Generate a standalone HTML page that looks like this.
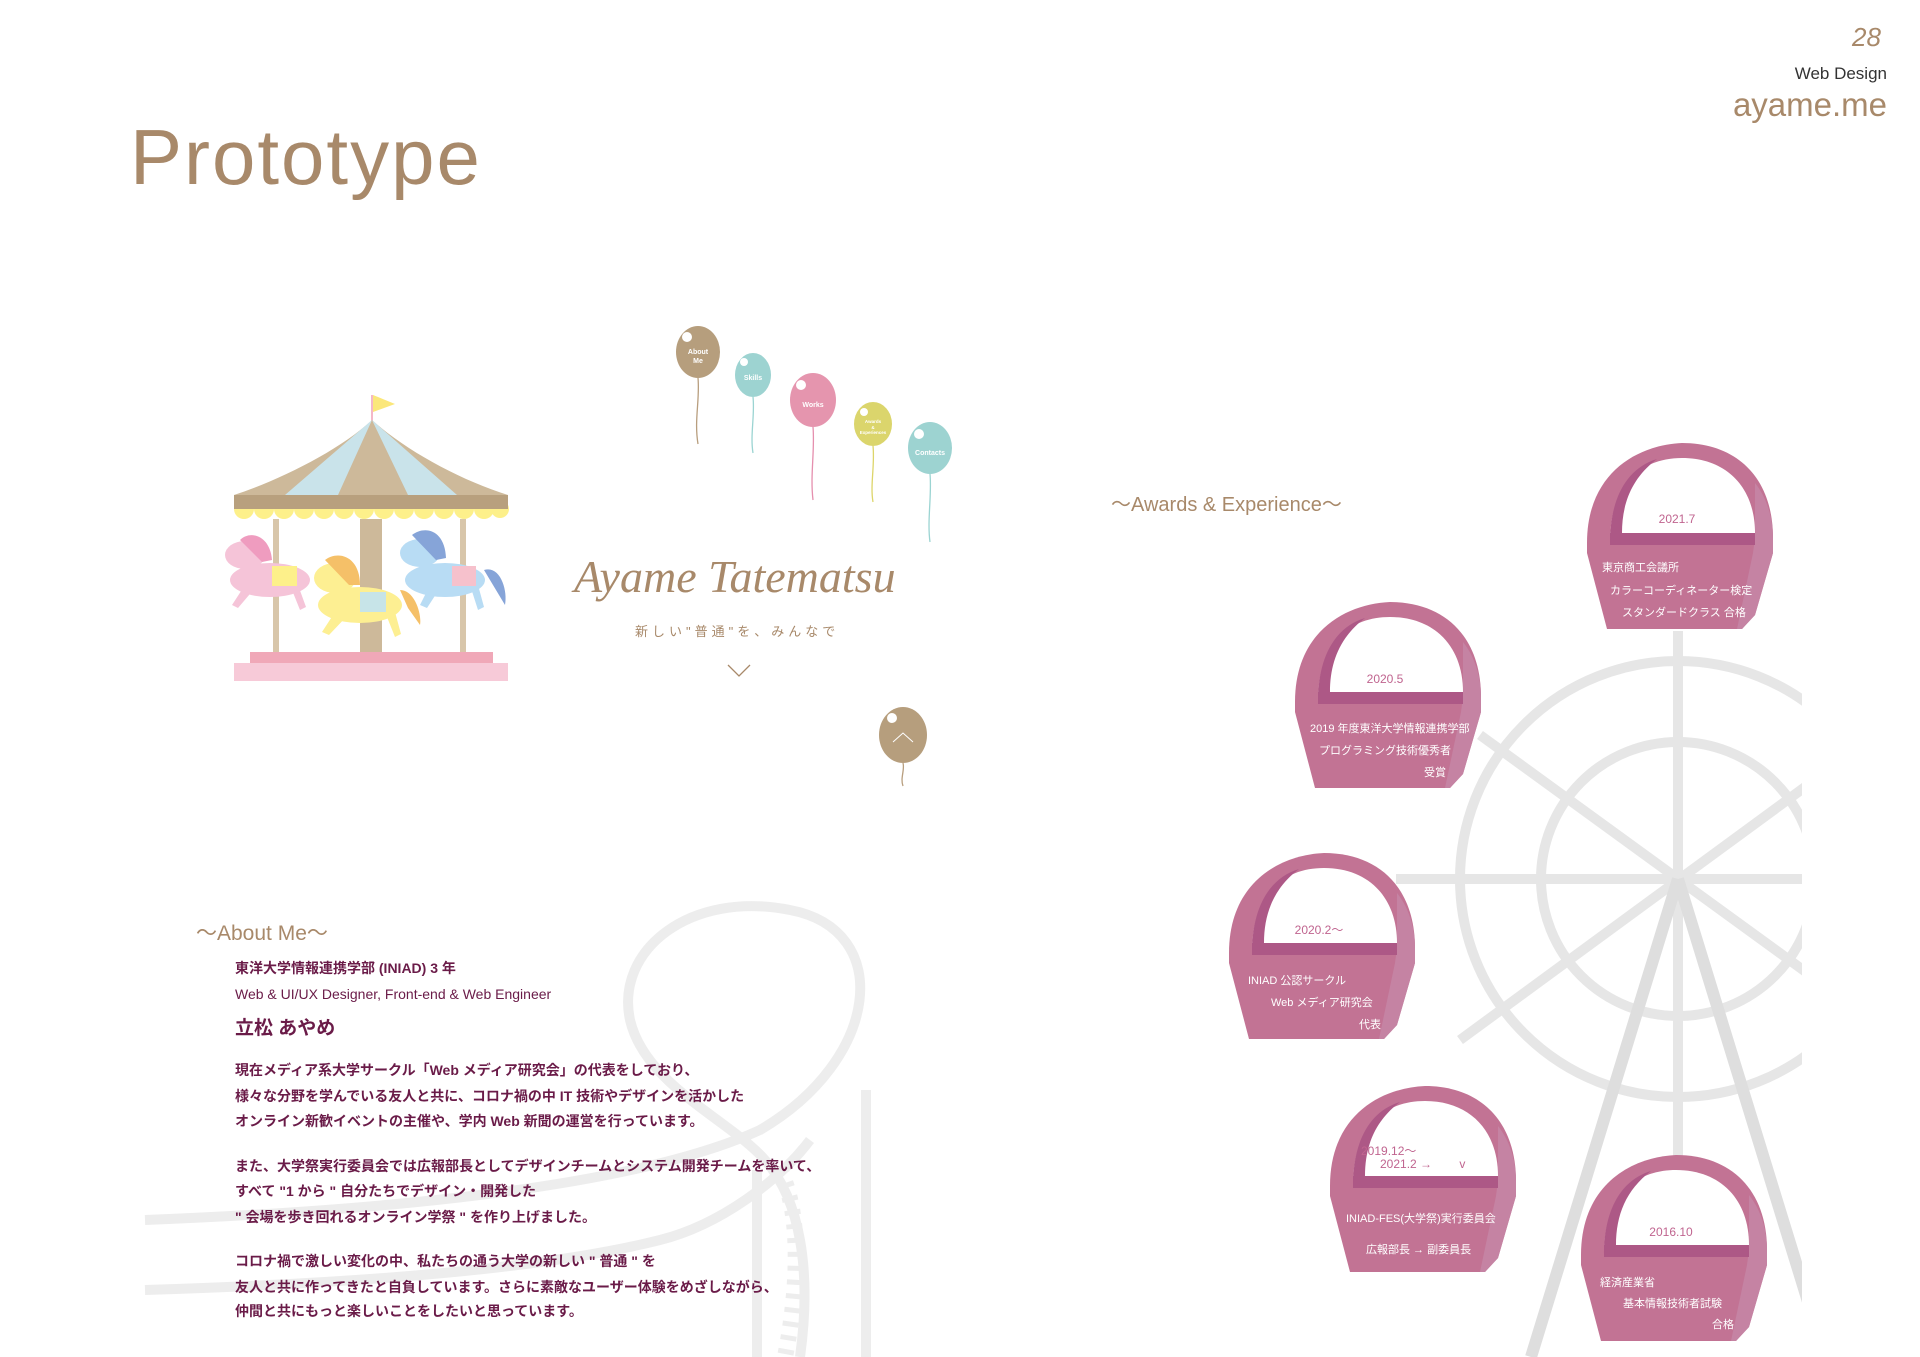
<!DOCTYPE html>
<html><head><meta charset="utf-8">
<style>
html,body{margin:0;padding:0;background:#fff;}
body{width:1920px;height:1357px;position:relative;overflow:hidden;font-family:"Liberation Sans","Noto Sans CJK JP",sans-serif;}
.a{position:absolute;white-space:nowrap;}
.br{color:#a8896a;}
.ab{color:#6a1b48;font-size:14px;line-height:20px;left:235px;font-weight:bold;}
</style></head><body>
<svg class="a" style="left:0;top:0" width="1920" height="1357" viewBox="0 0 1920 1357">
<defs><clipPath id="cw"><rect x="0" y="0" width="1802" height="1357"/></clipPath>
<g id="gon">
<path d="M0,100 C0,30 50,2 95,0 C150,0 186,35 186,95 L186,110 L168,172 L155,186 L20,186 L0,110 Z" fill="#c27394"/>
<path d="M168,40 C180,55 186,75 186,95 L186,110 L168,172 L155,186 L150,186 L166,110 L168,95 Z" fill="#c583a3"/>
<path d="M23,100 C23,40 55,15 95,15 C140,15 168,45 168,90 L168,100 Z" fill="#fff"/>
<path d="M23,100 C23,55 40,25 70,16 C45,35 35,60 35,90 Z" fill="#ad5886"/>
<rect x="23" y="90" width="145" height="12" fill="#ad5886"/>
</g></defs>
<!-- coaster -->
<g fill="none" stroke="#ededed" stroke-width="10">
<path d="M145,1220 C400,1210 640,1185 760,1130 C880,1060 895,930 790,910 C690,890 615,950 630,1020 C645,1085 730,1120 765,1160 C800,1200 812,1270 800,1357"/>
<path d="M145,1290 C400,1282 560,1265 660,1240 C720,1225 780,1180 810,1140"/>
<path d="M757,1170 L757,1357 M866,1090 L866,1357"/>
</g>
<path d="M780,1170 C800,1210 800,1280 785,1357" fill="none" stroke="#ededed" stroke-width="16" stroke-dasharray="5 9"/>
<!-- ferris wheel -->
<g clip-path="url(#cw)" fill="none">
<g stroke="#e6e6e6" stroke-width="10">
<circle cx="1678" cy="879" r="218"/>
<circle cx="1678" cy="879" r="137"/>
<path d="M1678,631 L1678,1160 M1396,879 L1802,879 M1480,735 L1876,1023 M1460,1040 L1876,735"/>
</g>
<path d="M1678,879 L1531,1357 M1678,879 L1825,1357" stroke="#dedede" stroke-width="12"/>
</g>
<!-- gondolas -->
<use href="#gon" x="1587" y="443"/>
<use href="#gon" x="1295" y="602"/>
<use href="#gon" x="1229" y="853"/>
<use href="#gon" x="1330" y="1086"/>
<use href="#gon" x="1581" y="1155"/>
<g font-family="Liberation Sans,Noto Sans CJK JP,sans-serif" font-size="11" fill="#fff">
<text x="1677" y="523" fill="#c0648f" font-size="12" text-anchor="middle">2021.7</text>
<text x="1602" y="571">東京商工会議所</text><text x="1610" y="594">カラーコーディネーター検定</text><text x="1622" y="616">スタンダードクラス 合格</text>
<text x="1385" y="683" fill="#c0648f" font-size="12" text-anchor="middle">2020.5</text>
<text x="1310" y="732">2019 年度東洋大学情報連携学部</text><text x="1319" y="754">プログラミング技術優秀者</text><text x="1424" y="776">受賞</text>
<text x="1319" y="934" fill="#c0648f" font-size="12" text-anchor="middle">2020.2～</text>
<text x="1248" y="984">INIAD 公認サークル</text><text x="1271" y="1006">Web メディア研究会</text><text x="1359" y="1028">代表</text>
<text x="1361" y="1155" fill="#c0648f" font-size="12">2019.12～</text><text x="1380" y="1168" fill="#c0648f" font-size="12">2021.2 → 　　v</text>
<text x="1346" y="1222">INIAD-FES(大学祭)実行委員会</text><text x="1366" y="1253">広報部長 → 副委員長</text>
<text x="1671" y="1236" fill="#c0648f" font-size="12" text-anchor="middle">2016.10</text>
<text x="1600" y="1286">経済産業省</text><text x="1623" y="1307">基本情報技術者試験</text><text x="1712" y="1328">合格</text>
</g>
<!-- carousel -->
<g>
<line x1="372" y1="395" x2="372" y2="422" stroke="#f4b8c8" stroke-width="2"/>
<path d="M373,395 L395,404 L373,412Z" fill="#fbe77a"/>
<path d="M372,420 C340,450 280,480 234,495 L508,495 C460,480 405,450 372,420Z" fill="#cdb99a"/>
<path d="M372,420 L285,495 L338,495Z M372,420 L408,495 L457,495Z" fill="#c9e3ea"/>
<g fill="#fdf08a"><circle cx="244" cy="509" r="10"/><circle cx="264" cy="509" r="10"/><circle cx="284" cy="509" r="10"/><circle cx="304" cy="509" r="10"/><circle cx="324" cy="509" r="10"/><circle cx="344" cy="509" r="10"/><circle cx="364" cy="509" r="10"/><circle cx="384" cy="509" r="10"/><circle cx="404" cy="509" r="10"/><circle cx="424" cy="509" r="10"/><circle cx="444" cy="509" r="10"/><circle cx="464" cy="509" r="10"/><circle cx="484" cy="509" r="10"/><circle cx="500" cy="509" r="9"/></g>
<rect x="234" y="495" width="274" height="14" fill="#b8a07e"/>
<rect x="273" y="519" width="6" height="134" fill="#d8c6aa"/>
<rect x="460" y="519" width="6" height="134" fill="#d8c6aa"/>
<rect x="360" y="519" width="22" height="134" fill="#cdb99a"/>
<rect x="250" y="652" width="243" height="11" fill="#f0a8b8"/>
<rect x="234" y="663" width="274" height="18" fill="#f7cad8"/>
<!-- horses -->
<g fill="#f5c4d8"><ellipse cx="270" cy="580" rx="40" ry="17"/><ellipse cx="245" cy="555" rx="20" ry="14"/><path d="M245,585 L232,605 L238,608 L255,588Z M290,585 L300,610 L306,607 L298,585Z"/></g>
<path d="M240,540 C250,530 270,535 272,560 L262,562Z" fill="#ef9cbf"/>
<rect x="272" y="566" width="25" height="20" fill="#fdf08a"/>
<g fill="#b8dcf4"><ellipse cx="445" cy="580" rx="40" ry="17"/><ellipse cx="420" cy="553" rx="20" ry="14"/><path d="M430,585 L420,605 L427,608 L440,588Z M470,585 L478,610 L484,607 L478,585Z"/></g>
<path d="M412,535 C425,525 445,530 446,558 L436,560Z M484,570 C500,565 508,590 505,605 L496,590Z" fill="#86a4d8"/>
<rect x="452" y="566" width="24" height="20" fill="#f6c1cc"/>
<g fill="#fdef92"><ellipse cx="360" cy="605" rx="42" ry="18"/><ellipse cx="335" cy="578" rx="21" ry="15"/><path d="M335,612 L322,632 L329,635 L348,615Z M385,612 L395,637 L401,634 L395,612Z"/></g>
<path d="M325,560 C338,550 360,556 360,585 L349,585Z M400,590 C415,590 422,615 420,625 L408,608Z" fill="#f5c068"/>
<rect x="360" y="592" width="26" height="20" fill="#c7e4e8"/>
</g>
<!-- balloons -->
<g fill="none" stroke-width="1.3">
<path d="M698,378 C700,400 694,420 698,444" stroke="#b89e7e"/>
<path d="M753,397 C755,415 750,435 753,453" stroke="#9bd4d2"/>
<path d="M813,427 C815,450 810,475 813,500" stroke="#e58fae"/>
<path d="M873,446 C875,465 870,485 873,502" stroke="#ddd56a"/>
<path d="M930,474 C932,495 927,520 930,542" stroke="#9bd4d2"/>
<path d="M903,763 C905,770 900,778 903,786" stroke="#b89e7e"/>
</g>
<g><ellipse cx="698" cy="352" rx="22" ry="26" fill="#b69e7d"/><circle cx="687" cy="337" r="5" fill="#fff"/>
<ellipse cx="753" cy="375" rx="18" ry="22" fill="#9dd3d1"/><circle cx="744" cy="362" r="4" fill="#fff"/>
<ellipse cx="813" cy="400" rx="23" ry="27" fill="#e595ae"/><circle cx="801" cy="385" r="5" fill="#fff"/>
<ellipse cx="873" cy="424" rx="19" ry="22" fill="#dbd56c"/><circle cx="864" cy="412" r="4" fill="#fff"/>
<ellipse cx="930" cy="448" rx="22" ry="26" fill="#9dd3d1"/><circle cx="919" cy="434" r="5" fill="#fff"/>
<ellipse cx="903" cy="735" rx="24" ry="28" fill="#b69e7d"/><circle cx="892" cy="718" r="5" fill="#fff"/>
<path d="M893,742 L903,733 L913,742" fill="none" stroke="#fff" stroke-width="1"/></g>
<g fill="#fff" font-family="Liberation Sans,sans-serif" font-weight="bold" text-anchor="middle">
<text x="698" y="354" font-size="7">About</text><text x="698" y="363" font-size="7">Me</text>
<text x="753" y="380" font-size="7">Skills</text>
<text x="813" y="407" font-size="7">Works</text>
<text x="873" y="423" font-size="4.5">Awards</text><text x="873" y="429" font-size="4.5">&amp;</text><text x="873" y="434" font-size="4.5">Experiences</text>
<text x="930" y="455" font-size="7">Contacts</text>
</g>
<path d="M728,665 L739,676 L750,665" fill="none" stroke="#a8896a" stroke-width="1.3"/>
</svg>

<div class="a br" style="left:1852px;top:22px;font-size:26px;font-style:italic;">28</div>
<div class="a" style="right:33px;top:64px;font-size:17px;color:#333;">Web Design</div>
<div class="a br" style="right:33px;top:86px;font-size:33px;">ayame.me</div>
<div class="a br" style="left:130px;top:112px;font-size:78px;letter-spacing:2px;">Prototype</div>

<div class="a br" style="left:574px;top:550px;font-size:46px;font-family:'Liberation Serif',serif;font-style:italic;">Ayame Tatematsu</div>
<div class="a br" style="left:635px;top:621px;font-size:13px;letter-spacing:4px;">新しい"普通"を、みんなで</div>

<div class="a br" style="left:1111px;top:488px;font-size:20px;">～Awards &amp; Experience～</div>
<div class="a br" style="left:196px;top:917px;font-size:21px;">～About Me～</div>

<div class="a ab" style="top:958px;">東洋大学情報連携学部 (INIAD) 3 年</div>
<div class="a ab" style="top:984px;font-weight:normal;">Web &amp; UI/UX Designer, Front-end &amp; Web Engineer</div>
<div class="a ab" style="top:1017px;font-size:19px;line-height:24px;">立松 あやめ</div>
<div class="a ab" style="top:1060px;">現在メディア系大学サークル「Web メディア研究会」の代表をしており、</div>
<div class="a ab" style="top:1086px;">様々な分野を学んでいる友人と共に、コロナ禍の中 IT 技術やデザインを活かした</div>
<div class="a ab" style="top:1111px;">オンライン新歓イベントの主催や、学内 Web 新聞の運営を行っています。</div>
<div class="a ab" style="top:1156px;">また、大学祭実行委員会では広報部長としてデザインチームとシステム開発チームを率いて、</div>
<div class="a ab" style="top:1181px;">すべて "1 から " 自分たちでデザイン・開発した</div>
<div class="a ab" style="top:1207px;">" 会場を歩き回れるオンライン学祭 " を作り上げました。</div>
<div class="a ab" style="top:1251px;">コロナ禍で激しい変化の中、私たちの通う大学の新しい " 普通 " を</div>
<div class="a ab" style="top:1277px;">友人と共に作ってきたと自負しています。さらに素敵なユーザー体験をめざしながら、</div>
<div class="a ab" style="top:1301px;">仲間と共にもっと楽しいことをしたいと思っています。</div>
</body></html>
